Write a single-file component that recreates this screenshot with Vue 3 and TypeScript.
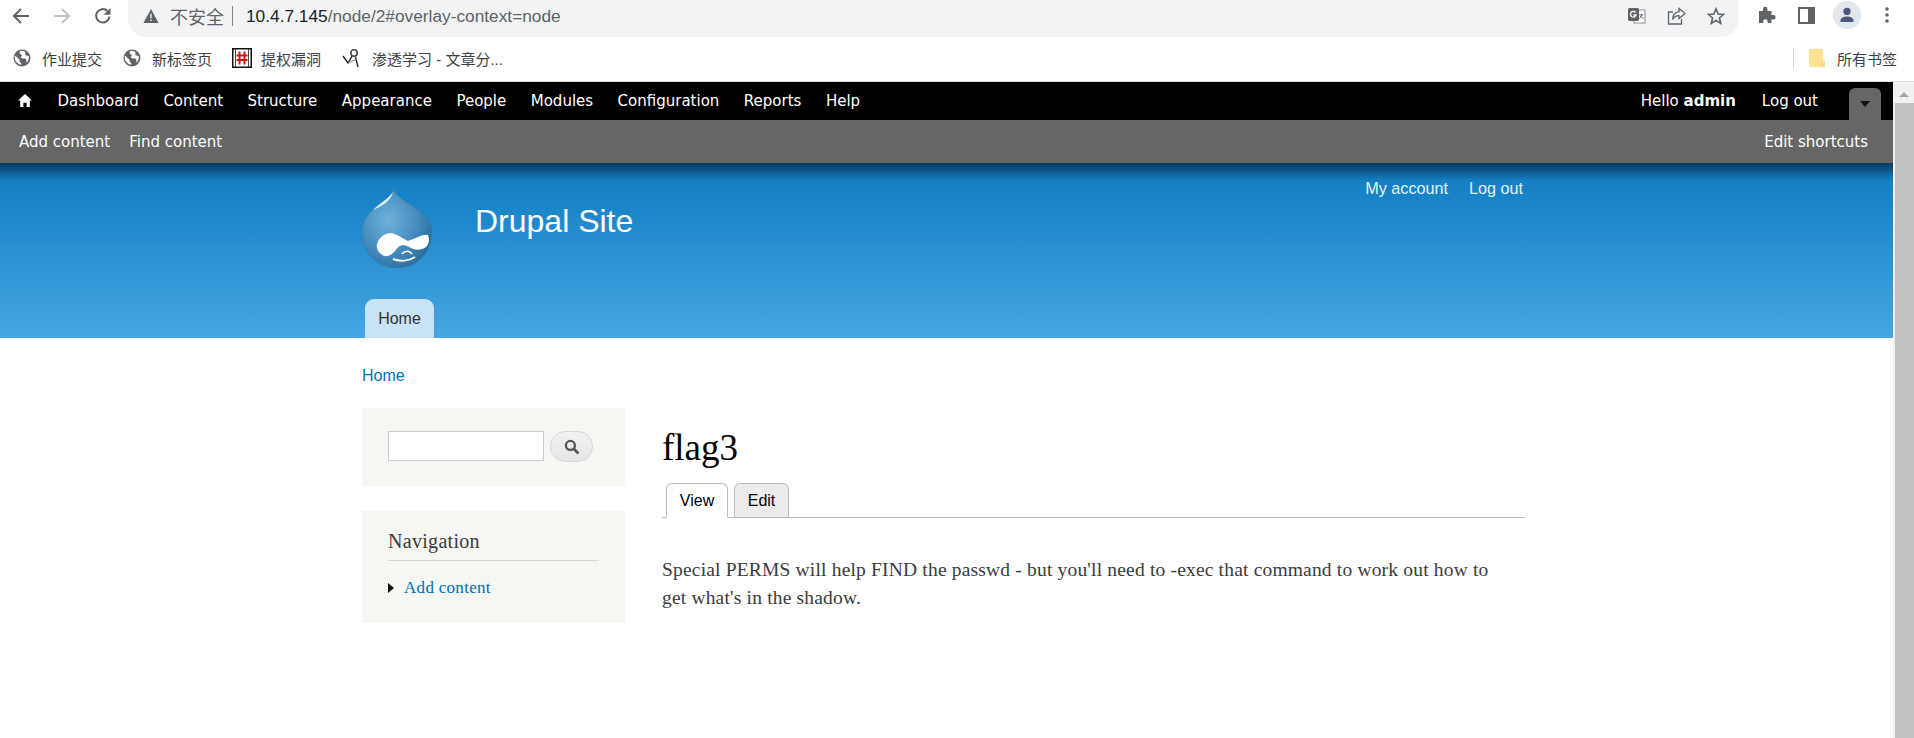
<script setup lang="ts">
const toolbarLinks = ['Dashboard', 'Content', 'Structure', 'Appearance', 'People', 'Modules', 'Configuration', 'Reports', 'Help']
</script>

<template>
  <div class="window">
    <div class="chrome-top">
      <div class="nav-btns">
        <svg width="20" height="20" viewBox="0 0 20 20"><path d="M18 10H3.500M10 3 3 10l7 7" fill="none" stroke="#5f6368" stroke-width="2" /></svg>
        <svg width="20" height="20" viewBox="0 0 20 20"><path d="M2 10h14.500M10 3l7 7-7 7" fill="none" stroke="#bdc1c6" stroke-width="2" /></svg>
        <svg width="20" height="20" viewBox="0 0 20 20"><path d="M16.500 10.500A6.700 6.700 0 1 1 14.500 5" fill="none" stroke="#5f6368" stroke-width="2" /><path d="M17.500 2v6.800h-6.800z" fill="#5f6368" /></svg>
      </div>
      <div class="omnibox">
        <svg class="warn" width="16" height="14" viewBox="0 0 13 12"><path d="M6.500 0 13 12H0z" fill="#5f6368" /><path d="M5.900 4h1.200v4H5.900zM5.900 9h1.200v1.200H5.900z" fill="#f1f3f4" /></svg>
        <span class="insecure">不安全</span>
        <span class="sep"></span>
        <span class="url"><b>10.4.7.145</b>/node/2#overlay-context=node</span>
        <div class="omni-icons">
          <svg width="20" height="18" viewBox="0 0 20 18"><rect x="7" y="3" width="11" height="13" fill="#fff" stroke="#8a8d91" /><rect x="1" y="1" width="11" height="13" rx="1.500" fill="#5f6368" /><path d="M8.500 5.500A2.800 2.800 0 1 0 9 8H6.500" fill="none" stroke="#fff" stroke-width="1.300" /><path d="M12.500 8h4M14.500 7v1.500l-2 3M13.500 9l3 3" fill="none" stroke="#5f6368" /></svg>
          <svg width="20" height="18" viewBox="0 0 20 18"><path d="M6 5H1.500v12h13v-5" fill="none" stroke="#5f6368" stroke-width="1.300" /><path d="M12 1.500 18 6.500 12 11.500V8.600C9 8.600 6.800 9.800 5.500 12.500 5.800 8 8 5.200 12 4.600z" fill="none" stroke="#5f6368" stroke-width="1.300" /></svg>
          <svg width="18" height="18" viewBox="0 0 18 18"><path d="M9 1.800 11.100 7l5.600.4-4.300 3.600 1.400 5.400L9 13.500l-4.800 2.900 1.400-5.400-4.300-3.600L6.900 7z" fill="none" stroke="#5f6368" stroke-width="1.600" /></svg>
        </div>
      </div>
      <div class="ext-icons">
        <svg class="puzzle" width="18" height="18" viewBox="0 0 18 18"><path d="M1 5h4V3a2.200 2.200 0 0 1 4.400 0v2h4v4h2a2.200 2.200 0 0 1 0 4.400h-2V17H9.600v-1.500a2.200 2.200 0 0 0-4.400 0V17H1z" fill="#5f6368" /></svg>
        <svg class="panel" width="17" height="17" viewBox="0 0 17 17"><rect width="17" height="17" fill="#5f6368" /><rect x="2" y="2" width="8" height="13" fill="#fff" /></svg>
        <span class="avatar">
          <svg width="16" height="16" viewBox="0 0 16 16"><circle cx="8" cy="4.400" r="3.600" fill="#4a5a78" /><path d="M1.500 15v-1.600C1.500 11 5 9.600 8 9.600s6.500 1.400 6.500 3.800V15z" fill="#4a5a78" /></svg>
        </span>
        <svg width="6" height="18" viewBox="0 0 6 18"><circle cx="3" cy="3" r="1.800" fill="#5f6368" /><circle cx="3" cy="9" r="1.800" fill="#5f6368" /><circle cx="3" cy="15" r="1.800" fill="#5f6368" /></svg>
      </div>
    </div>

    <div class="bookmarks">
      <div class="bm">
        <svg width="18" height="18" viewBox="0 0 16 16"><circle cx="8" cy="8" r="7.500" fill="#5f6368" /><path d="M7.300 14V12.500L5.800 11V9.600L1.800 5.700A6.500 6.500 0 0 0 7.300 14zM11.800 12.300C13.500 10.800 14.400 8.500 14 6.200L11 5.500V3.200L10 2A6.500 6.500 0 0 0 6 1.800V4L8 5.500 6.800 7.500 8.500 8.500H11L12 10z" fill="#fff" /></svg>
        <span>作业提交</span>
      </div>
      <div class="bm">
        <svg width="18" height="18" viewBox="0 0 16 16"><circle cx="8" cy="8" r="7.500" fill="#5f6368" /><path d="M7.300 14V12.500L5.800 11V9.600L1.800 5.700A6.500 6.500 0 0 0 7.300 14zM11.800 12.300C13.500 10.800 14.400 8.500 14 6.200L11 5.500V3.200L10 2A6.500 6.500 0 0 0 6 1.800V4L8 5.500 6.800 7.500 8.500 8.500H11L12 10z" fill="#fff" /></svg>
        <span>新标签页</span>
      </div>
      <div class="bm bm-flag">
        <svg width="20" height="20" viewBox="0 0 20 20"><rect x=".75" y=".75" width="18.500" height="18.500" fill="#fff" stroke="#111" stroke-width="1.500" /><path d="M7.500 3.500v13M12.500 3.500v13M4.500 7.500h11M4.500 12h11" stroke="#d01818" stroke-width="2" /><path d="M3.500 1v18M16.500 1v18" stroke="#444" /></svg>
        <span>提权漏洞</span>
      </div>
      <div class="bm">
        <svg width="18" height="20" viewBox="0 0 18 20"><path d="M1 8 6 15 10 8M16 19 13.500 9" fill="none" stroke="#222" stroke-width="1.400" /><circle cx="12" cy="5" r="3.200" fill="none" stroke="#444" stroke-width="1.600" /><path d="M6 15 15 11" stroke="#777" /></svg>
        <span class="bm-wide">渗透学习 - 文章分...</span>
      </div>
      <div class="bm-right">
        <span class="bm-sep"></span>
        <svg width="16" height="18" viewBox="0 0 16 18"><path d="M0 2a2 2 0 0 1 2-2h10a2 2 0 0 1 2 2v16H2a2 2 0 0 1-2-2z" fill="#fde293" /><rect x="12.500" y="12" width="3.500" height="6" rx="1.700" fill="#fde293" stroke="#f6ce60" stroke-width=".7" /></svg>
        <span>所有书签</span>
      </div>
    </div>

    <div class="viewport">
      <div class="page">
        <div class="admin-bar">
          <svg class="home-icon" width="14" height="13" viewBox="0 0 13 12"><path d="M6.500 0 13 6h-2v6H8V8H5v4H2V6H0z" fill="#fff" /></svg>
          <a v-for="link in toolbarLinks" :key="link" class="admin-link">{{ link }}</a>
          <span class="admin-spacer"></span>
          <span class="hello">Hello <strong>admin</strong></span>
          <a class="logout">Log out</a>
          <span class="drawer-toggle"><i></i></span>
        </div>
        <div class="shortcut-bar">
          <a>Add content</a>
          <a>Find content</a>
          <span class="admin-spacer"></span>
          <a>Edit shortcuts</a>
        </div>

        <header class="site-header">
          <div class="container header-inner">
            <div class="brand">
              <svg class="logo" width="70" height="80" viewBox="0 0 70 80">
                <defs>
                  <radialGradient id="drop" cx="38%" cy="40%" r="68%">
                    <stop offset="0" stop-color="#6fb2d9" />
                    <stop offset=".65" stop-color="#4189bb" />
                    <stop offset="1" stop-color="#2a6c9b" />
                  </radialGradient>
                </defs>
                <path d="M32 0c1 6 7 11 15 16 14 8 23 16 23 28 0 21-15 36-35 36S0 64 0 44C0 31 9 22 19 15 26 11 31 6 32 0z" fill="url(#drop)" stroke="#357fae" stroke-width=".8" />
                <path d="M31 4C26 11 18 15 11 22c7-3 18-8 20-18z" fill="#dcedf6" />
                <path d="M15 56c2-7 8-11 14-11 6 1 11 5 17 8 7-2 14-7 20-6 2 4 1 9-2 12-6 4-12 3-17 0-6-4-10-2-14 4-4 5-10 7-14 3-3-2-5-6-4-10z" fill="#fff" />
                <path d="M31 71c7 3 16 2 22-2" fill="none" stroke="#fff" stroke-width="2" />
                <path d="M40 66c2-3 7-4 10 0" fill="none" stroke="#fff" stroke-width="1.500" />
              </svg>
              <span class="site-name">Drupal Site</span>
            </div>
            <nav class="secondary-menu">
              <a>My account</a>
              <a>Log out</a>
            </nav>
            <div class="main-menu"><a>Home</a></div>
          </div>
        </header>

        <div class="container body">
          <div class="breadcrumb"><a>Home</a></div>
          <div class="columns">
            <aside class="sidebar">
              <div class="block search-block">
                <input class="search-input" type="text" />
                <button class="search-btn" type="button">
                  <svg width="16" height="16" viewBox="0 0 15 15"><circle cx="6" cy="6" r="4.200" fill="none" stroke="#555" stroke-width="2.200" /><path d="M9.200 9.200 13.500 13.500" stroke="#555" stroke-width="2.600" /></svg>
                </button>
              </div>
              <div class="block nav-block">
                <h2>Navigation</h2>
                <div class="nav-item"><i></i><a>Add content</a></div>
              </div>
            </aside>
            <main class="content">
              <h1>flag3</h1>
              <div class="tabs">
                <a class="tab active">View</a>
                <a class="tab">Edit</a>
              </div>
              <p>Special PERMS will help FIND the passwd - but you'll need to -exec that command to work out how to get what's in the shadow.</p>
            </main>
          </div>
        </div>
      </div>
      <div class="scrollbar">
        <span class="scroll-up"></span>
        <span class="scroll-thumb"></span>
      </div>
    </div>
  </div>
</template>

<style>
html, body { margin: 0; overflow: hidden; background: #fff; }
</style>

<style scoped>
.window { width: 1914px; height: 738px; display: flex; flex-direction: column; overflow: hidden; font-family: "Liberation Sans", "Noto Sans CJK SC", sans-serif; }

.chrome-top { height: 37px; display: flex; align-items: flex-start; flex: none; }
.nav-btns { display: flex; gap: 21px; width: 128px; padding: 6px 0 0 11px; box-sizing: border-box; flex: none; }
.omnibox { width: 1611px; height: 37px; flex: none; box-sizing: border-box; background: #f1f3f4; border-radius: 0 0 18px 18px; display: flex; align-items: center; padding: 0 14px 5px 0; }
.warn { margin-left: 15px; }
.insecure { margin-left: 11px; font-size: 18px; color: #5f6368; }
.sep { width: 1px; height: 20px; background: #80868b; margin: 0 13px 0 8px; }
.url { font-size: 17.3px; color: #5f6368; }
.url b { font-weight: 400; color: #202124; }
.omni-icons { margin-left: auto; display: flex; gap: 20px; align-items: center; }
.ext-icons { display: flex; align-items: center; height: 30px; margin-left: 19px; }
.puzzle { margin-right: 22px; }
.panel { margin-right: 18px; }
.avatar { width: 28px; height: 28px; border-radius: 50%; background: #e2e6ed; display: flex; align-items: center; justify-content: center; margin-right: 23px; }

.bookmarks { height: 45px; box-sizing: border-box; border-bottom: 1px solid #dadce0; flex: none; display: flex; align-items: center; padding: 0 0 2px 13px; font-size: 15px; color: #3c4043; }
.bm { display: flex; align-items: center; gap: 11px; margin-right: 21px; }
.bm-flag { gap: 9px; margin-left: -1px; }
.bm-wide { margin-left: 1px; }
.bm-right { margin-left: auto; display: flex; align-items: center; gap: 12px; margin-right: 17px; }
.bm-sep { width: 1px; height: 20px; background: #d0d2d4; margin-right: 3px; }

.viewport { flex: 1; display: flex; min-height: 0; }
.page { flex: 1; min-width: 0; }
.scrollbar { width: 21px; flex: none; background: #f1f1f1; display: flex; flex-direction: column; align-items: center; }
.scroll-up { margin-top: 10px; width: 0; height: 0; border: 5px solid transparent; border-top: 0; border-bottom: 5px solid #a3a3a3; }
.scroll-thumb { margin: 6px 0 0 2px; width: 19px; flex: 1; background: #c1c1c1; }

.admin-bar { height: 38px; background: #000; color: #fff; display: flex; align-items: center; font-family: "DejaVu Sans", sans-serif; font-size: 15px; padding-left: 18px; }
.home-icon { margin-right: 25.5px; margin-top: -1px; flex: none; }
.admin-link { margin-right: 24.5px; }
.admin-spacer { flex: 1; }
.hello strong { font-weight: 700; }
.logout { margin-left: 26px; margin-right: 31px; }
.drawer-toggle { width: 32px; height: 32px; margin-top: 6px; margin-right: 12px; background: #666; border-radius: 6px 6px 0 0; display: flex; align-items: center; justify-content: center; }
.drawer-toggle i { width: 0; height: 0; border: 5px solid transparent; border-top: 6px solid #111; border-bottom: 0; }

.shortcut-bar { height: 43px; background: #666; color: #fff; display: flex; align-items: center; font-family: "DejaVu Sans", sans-serif; font-size: 15px; padding: 0 25px 0 19px; gap: 19px; }

.site-header { height: 175px; background: linear-gradient(to bottom, #0a3a5e 0, #1580c5 18px, #1a84c8 40px, #45a6e2 100%); }
.container { width: 1163px; margin-left: 362px; }
.header-inner { height: 175px; position: relative; display: flex; }
.brand { display: flex; align-items: flex-start; padding-top: 25px; }
.logo { display: block; }
.site-name { font-size: 32px; color: #fff; margin-left: 43px; margin-top: 15px; }
.secondary-menu { position: absolute; right: 2px; top: 16px; font-size: 16.2px; color: #e3f1fb; display: flex; gap: 21px; }
.main-menu { position: absolute; left: 3px; bottom: 0; }
.main-menu a { display: block; height: 39px; line-height: 39px; width: 69px; text-align: center; background: #c9e3f6; border-radius: 9px 9px 0 0; font-size: 16px; color: #333; }

.breadcrumb { padding-top: 28px; font-size: 16px; line-height: 20px; color: #0071b3; }
.columns { display: flex; margin-top: 22px; }
.sidebar { width: 263px; flex: none; margin-right: 37px; }
.block { background: #f6f6f2; box-sizing: border-box; }
.search-block { height: 78px; padding: 23px 0 0 26px; display: flex; align-items: flex-start; margin-bottom: 25px; }
.search-input { width: 156px; height: 30px; box-sizing: border-box; border: 1px solid #ccc; background: #fff; padding: 0; margin: 0; outline: 0; border-radius: 0; }
.search-btn { width: 43px; height: 31px; margin: 0 0 0 6px; padding: 0; border: 1px solid #d8d8d8; border-radius: 15px; background: linear-gradient(#f2f2f2, #e6e6e6); display: flex; align-items: center; justify-content: center; }
.nav-block { height: 112px; padding: 15px 26px 0 26px; }
.nav-block h2 { margin: 0; font: 400 20px/30px "Liberation Serif", serif; color: #3b3b3b; padding-bottom: 4px; border-bottom: 1px solid #d6d6d6; width: 211px; letter-spacing: .3px; }
.nav-item { display: flex; align-items: center; margin-top: 15px; font: 17px/24px "Liberation Serif", serif; letter-spacing: .3px; color: #0071b3; }
.nav-item i { width: 0; height: 0; border: 5px solid transparent; border-left: 6px solid #111; border-right: 0; margin-right: 10px; }

.content { flex: 1; min-width: 0; }
.content h1 { margin: 0; padding-top: 17px; font: 400 37px/46px "Liberation Serif", serif; color: #000; }
.tabs { display: flex; height: 35px; box-sizing: border-box; margin-top: 12px; padding-left: 4px; gap: 6px; border-bottom: 1px solid #bbb; }
.tab { height: 35px; width: 55px; box-sizing: border-box; border: 1px solid #bbb; border-radius: 6px 6px 0 0; background: #ececec; font-size: 16px; line-height: 33px; text-align: center; color: #000; }
.tab.active { width: 62px; background: #fff; border-bottom-color: #fff; }
.content p { margin: 38px 0 0; max-width: 850px; font: 19.5px/28px "Liberation Serif", serif; color: #3b3b3b; letter-spacing: .18px; }
a { cursor: pointer; }
</style>
